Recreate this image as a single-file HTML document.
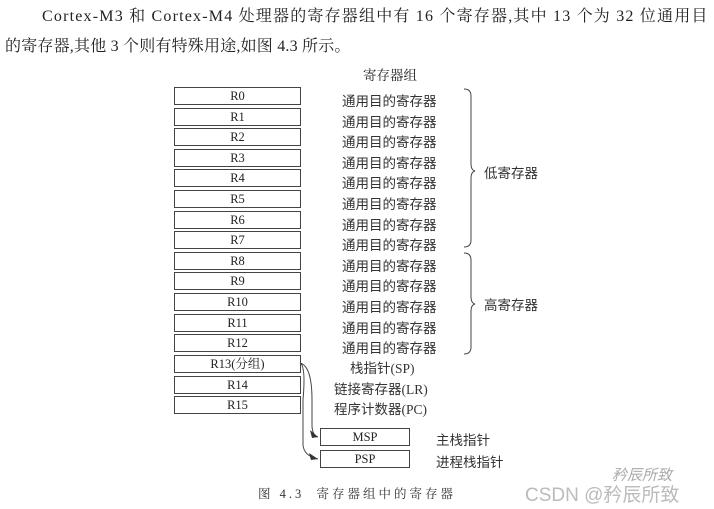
<!DOCTYPE html>
<html><head><meta charset="utf-8"><style>
body{margin:0;width:714px;height:509px;background:#fff;position:relative;overflow:hidden;font-family:"Liberation Serif","Noto Serif CJK SC",serif;color:#222}
.t{position:absolute;white-space:nowrap}
.b{position:absolute;left:174px;width:125px;height:16px;border:1px solid #444;font-size:12.5px;text-align:center;line-height:16px}
.l{position:absolute;left:342px;font-size:13.5px;white-space:nowrap;font-family:"Liberation Serif","Noto Sans CJK SC",sans-serif;color:#333}
</style></head><body>
<div class="t" style="left:42px;top:3px;font-size:16px;letter-spacing:1.2px">Cortex-M3 和 Cortex-M4 处理器的寄存器组中有 16 个寄存器,其中 13 个为 32 位通用目</div>
<div class="t" style="left:5px;top:33px;font-size:16px;letter-spacing:0.2px">的寄存器,其他 3 个则有特殊用途,如图 4.3 所示。</div>
<div class="t" style="left:363px;top:64px;font-size:13.5px">寄存器组</div>

<div class="b" style="top:87px">R0</div>
<div class="b" style="top:107.6px">R1</div>
<div class="b" style="top:128.2px">R2</div>
<div class="b" style="top:148.8px">R3</div>
<div class="b" style="top:169.4px">R4</div>
<div class="b" style="top:190px">R5</div>
<div class="b" style="top:210.6px">R6</div>
<div class="b" style="top:231.2px">R7</div>
<div class="b" style="top:251.8px">R8</div>
<div class="b" style="top:272.4px">R9</div>
<div class="b" style="top:293px">R10</div>
<div class="b" style="top:313.6px">R11</div>
<div class="b" style="top:334.2px">R12</div>
<div class="b" style="top:355px">R13(分组)</div>
<div class="b" style="top:375.5px">R14</div>
<div class="b" style="top:396px">R15</div>

<div class="l" style="top:90px">通用目的寄存器</div>
<div class="l" style="top:110.6px">通用目的寄存器</div>
<div class="l" style="top:131.2px">通用目的寄存器</div>
<div class="l" style="top:151.8px">通用目的寄存器</div>
<div class="l" style="top:172.4px">通用目的寄存器</div>
<div class="l" style="top:193px">通用目的寄存器</div>
<div class="l" style="top:213.6px">通用目的寄存器</div>
<div class="l" style="top:234.2px">通用目的寄存器</div>
<div class="l" style="top:254.8px">通用目的寄存器</div>
<div class="l" style="top:275.4px">通用目的寄存器</div>
<div class="l" style="top:296px">通用目的寄存器</div>
<div class="l" style="top:316.6px">通用目的寄存器</div>
<div class="l" style="top:337.2px">通用目的寄存器</div>
<div class="l" style="top:357px;left:350px">栈指针(SP)</div>
<div class="l" style="top:377.5px;left:334px">链接寄存器(LR)</div>
<div class="l" style="top:398px;left:334px">程序计数器(PC)</div>

<div class="l" style="top:162px;left:484px">低寄存器</div>
<div class="l" style="top:294px;left:484px">高寄存器</div>

<div class="b" style="left:320px;top:428px;width:88px">MSP</div>
<div class="b" style="left:320px;top:450px;width:88px">PSP</div>
<div class="l" style="top:429px;left:436px">主栈指针</div>
<div class="l" style="top:451px;left:436px">进程栈指针</div>

<svg style="position:absolute;left:0;top:0" width="714" height="509">
<g fill="none" stroke="#444" stroke-width="1">
<path d="M464 89 Q471 89 471 96 L471 164 Q471 170 475 171 Q471 172 471 178 L471 240 Q471 247 464 247"/>
<path d="M464 253 Q471 253 471 260 L471 297 Q471 303 475 304 Q471 305 471 311 L471 347 Q471 354 464 354"/>
<path d="M300 363 Q312 366 312 400 L312 425 Q312 435 318 437"/>
<path d="M300 363 Q306 366 303 400 L303 445 Q304 456 318 459"/>
</g>
<path d="M318 437 L310 430 L312 438 Z M318 459 L309 453 L311 460 Z" fill="#333"/>
</svg>

<div class="t" style="left:258px;top:484px;font-size:12.5px;letter-spacing:3px;color:#333">图 4.3 &nbsp;寄存器组中的寄存器</div>
<div class="t" style="left:612px;top:464px;font-size:15px;color:#aaa;font-family:'Liberation Sans','Noto Sans CJK SC',sans-serif;font-style:italic">矜辰所致</div>
<div class="t" style="left:525px;top:480px;font-size:19px;color:#bbb;font-family:'Liberation Sans','Noto Sans CJK SC',sans-serif">CSDN @矜辰所致</div>
</body></html>
